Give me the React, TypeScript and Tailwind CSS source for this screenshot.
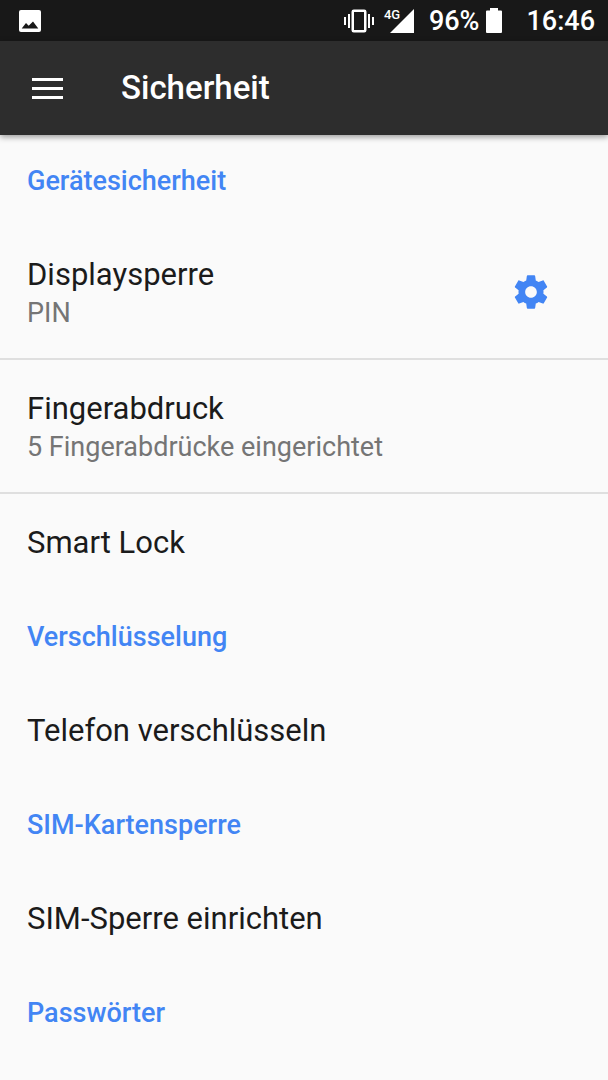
import React from 'react';

interface SettingItem {
  title: string;
  summary?: string;
  configurable?: boolean;
}

interface SettingSection {
  title: string;
  items: SettingItem[];
}

const sections: SettingSection[] = [
  {
    title: 'Gerätesicherheit',
    items: [
      { title: 'Displaysperre', summary: 'PIN', configurable: true },
      { title: 'Fingerabdruck', summary: '5 Fingerabdrücke eingerichtet' },
      { title: 'Smart Lock' },
    ],
  },
  { title: 'Verschlüsselung', items: [{ title: 'Telefon verschlüsseln' }] },
  { title: 'SIM-Kartensperre', items: [{ title: 'SIM-Sperre einrichten' }] },
  { title: 'Passwörter', items: [] },
];

const StatusBar: React.FC = () => (
  <div className="flex h-[41px] items-center justify-between bg-[#181818] pl-[19px] pr-[13px] text-white">
    <svg className="h-[22px] w-[22px]" viewBox="0 0 22 22" aria-hidden="true">
      <rect width="22" height="22" rx="2" fill="#fff" />
      <path d="M2.7 18.5 7 13 9.7 15.8 14 11.5 19.3 18.5Z" fill="#181818" />
    </svg>

    <div className="flex items-center text-[27px] leading-8">
      <svg className="mr-2.5 h-6 w-[30px]" viewBox="0 0 30 24" aria-hidden="true">
        <path d="M0 8h2v8H0zM4 5h2v14H4zM24 5h2v14h-2zM28 8h2v8h-2z" fill="#fff" />
        <rect x="8.75" y="1.75" width="12.5" height="20.5" rx="1" fill="none" stroke="#fff" strokeWidth="2.5" />
      </svg>
      <div className="relative mr-[15px] h-6 w-[30px]">
        <svg className="h-6 w-[30px]" viewBox="0 0 30 24" aria-hidden="true">
          <path d="M30 0v24H6z" fill="#fff" />
        </svg>
        <span className="absolute left-0 top-0 text-[13px] font-medium leading-3">4G</span>
      </div>
      <span className="mr-[7px] font-medium">96%</span>
      <svg className="mr-6 h-[25px] w-4" viewBox="0 0 16 25" aria-hidden="true">
        <path d="M4 0h8v2.500H15a1 1 0 0 1 1 1V24a1 1 0 0 1-1 1H1a1 1 0 0 1-1-1V3.500a1 1 0 0 1 1-1h3z" fill="#fff" />
      </svg>
      <span className="font-medium">16:46</span>
    </div>
  </div>
);

const AppBar: React.FC = () => (
  <header className="relative flex h-[94px] items-center bg-[#2d2d2d] pl-8 shadow-[0_2px_6px_rgba(0,0,0,0.4)]">
    <button type="button" aria-label="Menü" className="mr-[58px] text-white">
      <svg className="h-[21px] w-[31px]" viewBox="0 0 31 21" aria-hidden="true">
        <path d="M0 0h31v3H0zM0 9h31v3H0zM0 18h31v3H0z" fill="currentColor" />
      </svg>
    </button>
    <h1 className="text-[33px] font-medium leading-10 text-white">Sicherheit</h1>
  </header>
);

const SettingRow: React.FC<{ item: SettingItem }> = ({ item }) => (
  <li className="flex items-center justify-between px-[27px]">
    <div className={item.summary ? 'pt-[30px] pb-[26px]' : 'pt-[30px] pb-[29px]'}>
      <h3 className="text-[31px] leading-[38px] text-[#1b1b1b]">{item.title}</h3>
      {item.summary && <p className="text-[27px] leading-[38px] text-[#757575]">{item.summary}</p>}
    </div>
    {item.configurable && (
      <button type="button" aria-label={`${item.title} konfigurieren`} className="mr-[30px] text-[#4285f4]">
        <svg className="h-10 w-10" viewBox="0 0 24 24" fill="currentColor" aria-hidden="true">
          <path d="M19.430 12.980c.040-.320.070-.640.070-.980s-.030-.660-.070-.980l2.110-1.650c.190-.150.240-.420.120-.640l-2-3.460c-.120-.220-.390-.300-.610-.220l-2.490 1c-.520-.400-1.080-.730-1.690-.980l-.380-2.650C14.460 2.180 14.250 2 14 2h-4c-.250 0-.460.180-.490.420l-.380 2.650c-.610.250-1.170.590-1.690.980l-2.490-1c-.230-.090-.490 0-.610.220l-2 3.460c-.130.220-.070.490.120.640l2.110 1.650c-.040.320-.070.650-.070.980s.030.660.070.980l-2.110 1.650c-.190.150-.240.420-.120.640l2 3.460c.120.220.390.300.610.220l2.490-1c.520.400 1.080.730 1.690.980l.380 2.650c.030.240.240.420.490.420h4c.250 0 .460-.180.490-.420l.380-2.650c.610-.250 1.170-.590 1.690-.980l2.490 1c.230.090.490 0 .610-.220l2-3.460c.120-.220.070-.490-.120-.640l-2.110-1.650zM12 15.500c-1.930 0-3.500-1.570-3.500-3.500s1.570-3.500 3.500-3.500 3.500 1.570 3.500 3.500-1.570 3.500-3.500 3.500z" />
        </svg>
      </button>
    )}
  </li>
);

export default function App() {
  return (
    <div className="min-h-screen bg-[#fafafa] font-['Roboto',sans-serif]">
      <StatusBar />
      <AppBar />
      <main>
        {sections.map((section) => (
          <section key={section.title}>
            <h2 className="flex h-[91px] items-center px-[27px] text-[27px] font-medium leading-8 text-[#4285f4]">
              {section.title}
            </h2>
            <ul className="divide-y-2 divide-[#dfdfdf]">
              {section.items.map((item) => (
                <SettingRow key={item.title} item={item} />
              ))}
            </ul>
          </section>
        ))}
      </main>
    </div>
  );
}
